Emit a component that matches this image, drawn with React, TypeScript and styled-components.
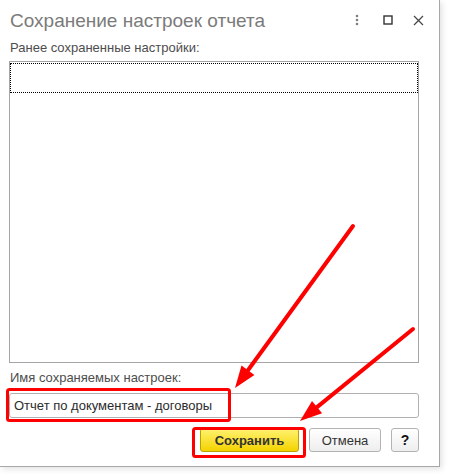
import styled, { createGlobalStyle } from 'styled-components';

const GlobalStyle = createGlobalStyle`
    html, body {
        margin: 0;
        padding: 0;
        background: #ffffff;
    }
    body {
        font-family: 'Liberation Sans', Arial, sans-serif;
    }
`;

const Page = styled.div`
    position: relative;
    width: 449px;
    height: 474px;
    overflow: hidden;
`;

const Window = styled.div`
    width: 440px;
    height: 467px;
    box-sizing: border-box;
    background: #fff;
    border-right: 1px solid #a8a8a8;
    border-bottom: 1px solid #a8a8a8;
    box-shadow: 2px 2px 6px rgba(0, 0, 0, 0.12);
    display: flex;
    flex-direction: column;
    padding: 0 20px 0 9px;
`;

const TitleBar = styled.div`
    height: 40px;
    display: flex;
    align-items: center;
    padding-left: 1px;
`;

const Title = styled.div`
    flex: 1;
    font-size: 19px;
    color: #7b7b7b;
    margin-top: 1px;
`;

const TitleButtons = styled.div`
    display: flex;
    align-items: center;
    margin-right: -15px;
`;

const TitleIcon = styled.div`
    width: 31px;
    height: 20px;
    display: flex;
    align-items: center;
    justify-content: center;
`;

const FieldLabel = styled.div<{ $top: number }>`
    font-size: 13px;
    color: #4d4d4d;
    padding-left: 1px;
    margin-top: ${p => p.$top}px;
    height: 15px;
    line-height: 15px;
`;

const List = styled.div`
    margin-top: 6px;
    height: 302px;
    box-sizing: border-box;
    border: 1px solid #a5a5a5;
    padding: 1px 0 0 0;
`;

const FocusRow = styled.div`
    height: 30px;
    box-sizing: border-box;
    border: 1px dotted #000;
`;

const Input = styled.div`
    margin-top: 8px;
    height: 25px;
    box-sizing: border-box;
    border: 1px solid #b0b0b0;
    border-radius: 3px;
    display: flex;
    align-items: center;
    padding-left: 4px;
    font-size: 13px;
    color: #2b2b2b;
`;

const ButtonRow = styled.div`
    margin-top: 10px;
    display: flex;
    justify-content: flex-end;
    gap: 10px;
`;

const Button = styled.div<{ $primary?: boolean; $bold?: boolean; $width: number }>`
    width: ${p => p.$width}px;
    height: 24px;
    box-sizing: border-box;
    border-radius: 3px;
    display: flex;
    align-items: center;
    justify-content: center;
    font-size: ${p => (p.$bold ? '14px' : '13px')};
    color: ${p => (p.$bold ? '#111' : '#333')};
    border: 1px solid ${p => (p.$primary ? '#b9a200' : '#b3b3b3')};
    background: ${p =>
        p.$primary
            ? 'linear-gradient(#fff270, #f4d300)'
            : 'linear-gradient(#ffffff, #eeeeee)'};
    font-weight: ${p => (p.$primary || p.$bold ? 'bold' : 'normal')};
`;

const Overlay = styled.svg`
    position: absolute;
    left: 0;
    top: 0;
    pointer-events: none;
`;

const Arrow = ({ x1, y1, x2, y2 }: { x1: number; y1: number; x2: number; y2: number }) => {
    const dx = x2 - x1;
    const dy = y2 - y1;
    const len = Math.hypot(dx, dy);
    const ux = dx / len;
    const uy = dy / len;
    const head = 22;
    const half = 8;
    const bx = x2 - ux * head;
    const by = y2 - uy * head;
    const pts = `${x2},${y2} ${bx - uy * half},${by + ux * half} ${bx + uy * half},${by - ux * half}`;
    return (
        <g>
            <line x1={x1} y1={y1} x2={bx} y2={by} stroke="#ff0000" strokeWidth={4} strokeLinecap="round" />
            <polygon points={pts} fill="#ff0000" />
        </g>
    );
};

const App = () => (
    <>
        <GlobalStyle />
        <Page>
            <Window>
                <TitleBar>
                    <Title>Сохранение настроек отчета</Title>
                    <TitleButtons>
                        <TitleIcon>
                            <svg width="4" height="12" viewBox="0 0 4 12">
                                <circle cx="2" cy="2" r="1.3" fill="#808080" />
                                <circle cx="2" cy="6" r="1.3" fill="#808080" />
                                <circle cx="2" cy="10" r="1.3" fill="#808080" />
                            </svg>
                        </TitleIcon>
                        <TitleIcon>
                            <svg width="10" height="10" viewBox="0 0 10 10">
                                <rect x="1" y="1" width="8" height="8" fill="none" stroke="#333" strokeWidth="1.4" />
                            </svg>
                        </TitleIcon>
                        <TitleIcon>
                            <svg width="11" height="11" viewBox="0 0 11 11">
                                <path d="M1 1 L10 10 M10 1 L1 10" stroke="#444" strokeWidth="1.2" />
                            </svg>
                        </TitleIcon>
                    </TitleButtons>
                </TitleBar>
                <FieldLabel $top={0}>Ранее сохраненные настройки:</FieldLabel>
                <List>
                    <FocusRow />
                </List>
                <FieldLabel $top={7}>Имя сохраняемых настроек:</FieldLabel>
                <Input>Отчет по документам - договоры</Input>
                <ButtonRow>
                    <Button $primary $width={99}>Сохранить</Button>
                    <Button $width={72}>Отмена</Button>
                    <Button $bold $width={28}>?</Button>
                </ButtonRow>
            </Window>
            <Overlay width={449} height={474}>
                <rect x={7.5} y={389.5} width={222} height={31} rx={2} fill="none" stroke="#ff0000" strokeWidth={3} />
                <rect x={193.5} y={428.5} width={111} height={28} rx={2} fill="none" stroke="#ff0000" strokeWidth={3} />
                <Arrow x1={353} y1={226} x2={235} y2={388} />
                <Arrow x1={413} y1={329} x2={300} y2={421} />
            </Overlay>
        </Page>
    </>
);

export default App;
